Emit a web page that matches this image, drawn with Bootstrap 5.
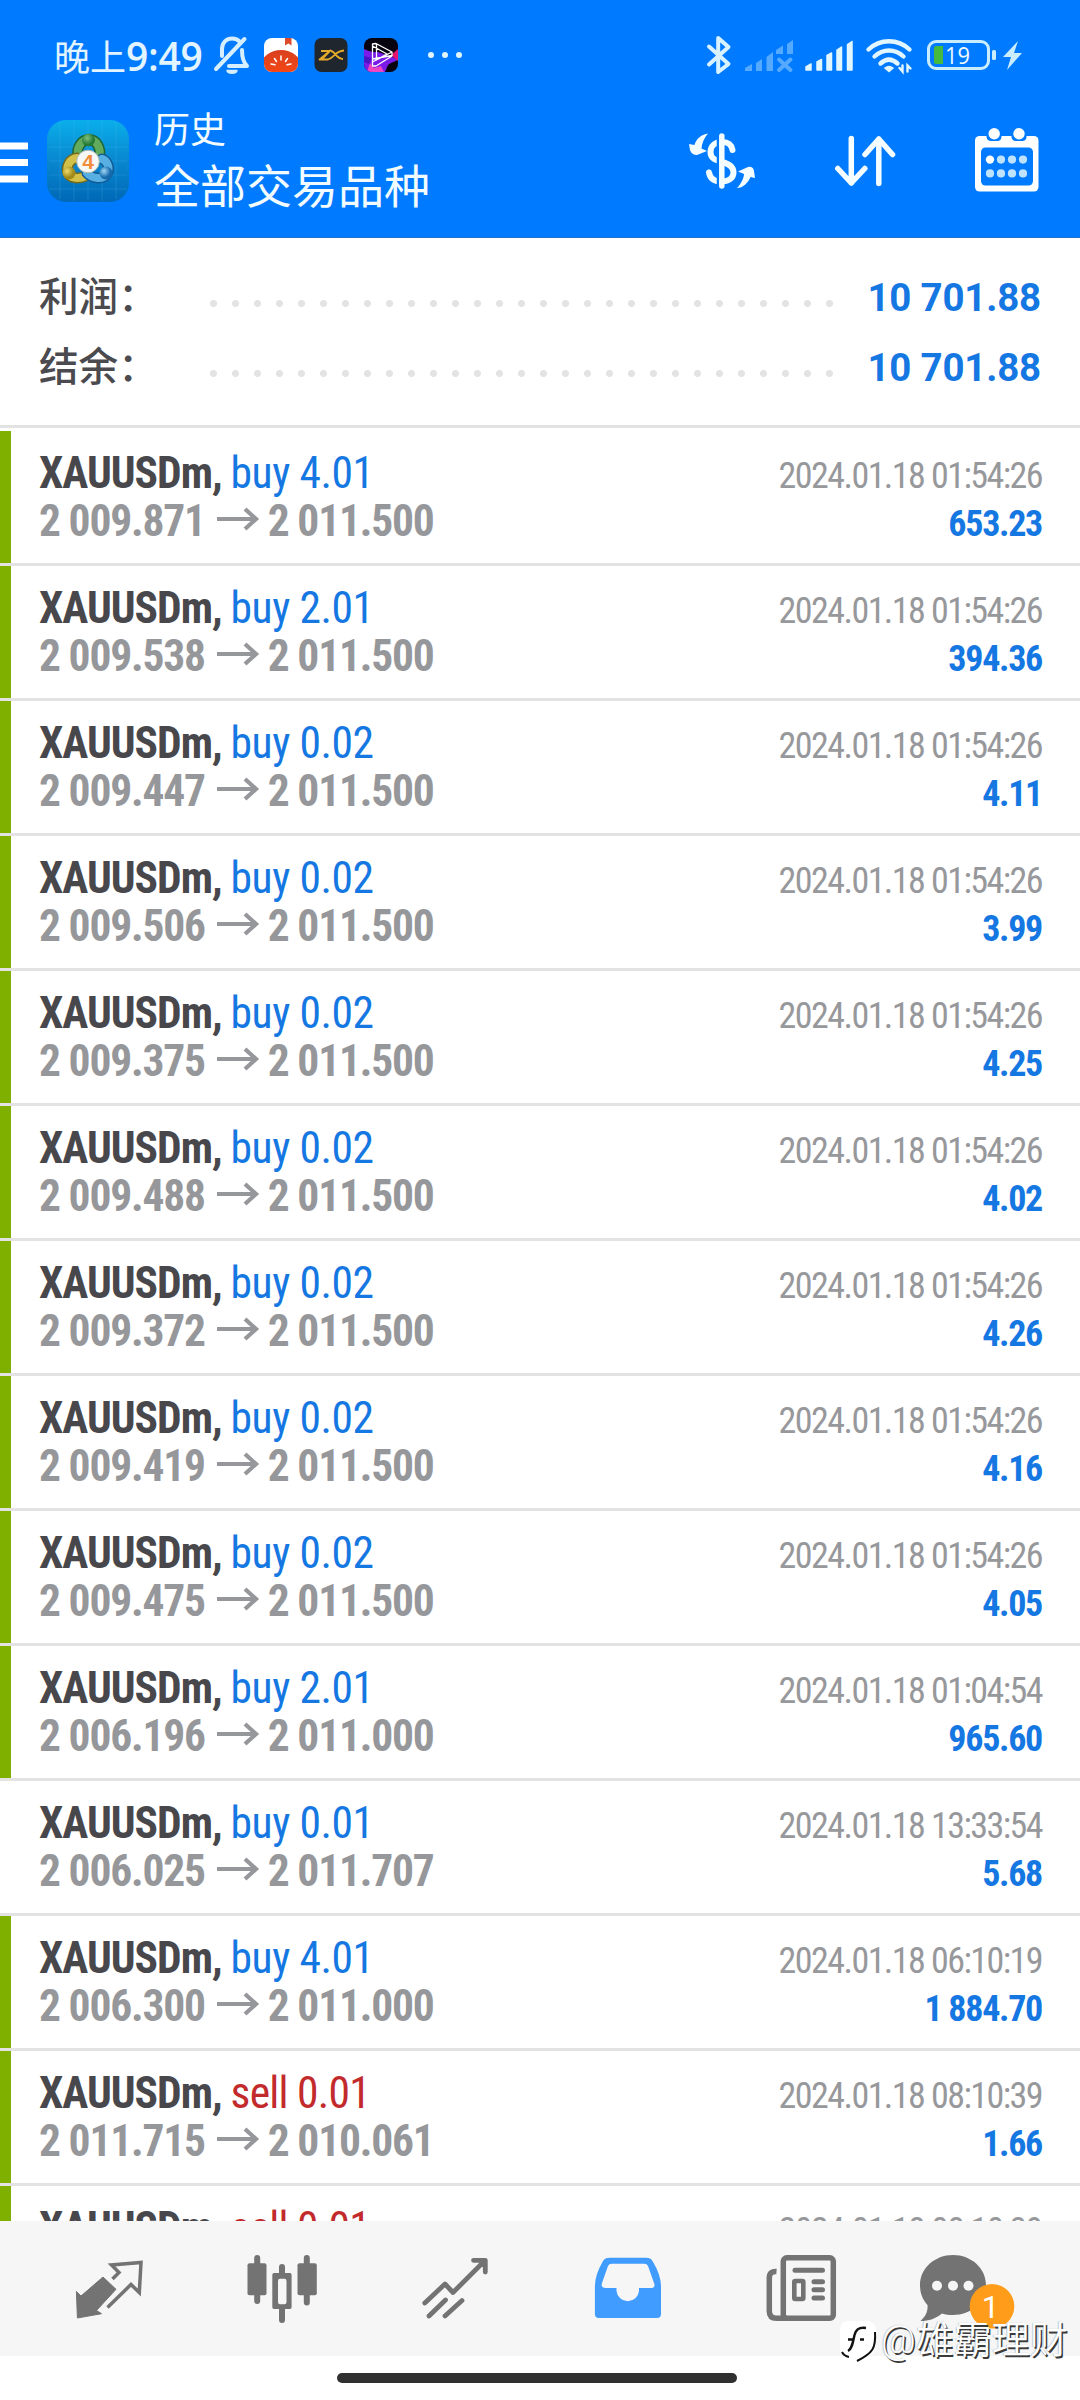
<!DOCTYPE html>
<html lang="zh-CN">
<head>
<meta charset="utf-8">
<meta name="viewport" content="width=device-width, initial-scale=1">
<title>历史</title>
<link href="https://cdn.jsdelivr.net/npm/bootstrap@5.3.0/dist/css/bootstrap.min.css" rel="stylesheet">
<style>
body{font-family:Roboto,"Noto Sans CJK SC",sans-serif;background:#fff;overflow:hidden}
svg{display:block;flex:none;overflow:visible}
.screen{width:1080px;height:2400px;overflow:hidden;position:relative}
.topbar{background:#007bff;height:238px;border-bottom:1px solid #1f6fd0;color:#f2fcff}
.statusbar{height:110px;padding:0 57px 0 54px;color:#e2f4ff}
.clock{font-family:"Open Sans","Noto Sans CJK SC",sans-serif;font-size:39px;font-weight:550;width:142px;line-height:48px;white-space:nowrap;letter-spacing:-.3px}
.clock span{font-family:"Noto Sans CJK SC",sans-serif;font-size:36px;font-weight:400;letter-spacing:0}
.gap16{gap:16px}.gap13{gap:13px}.gap70{gap:70px}
.titlebar{height:102px;padding-right:38px}
.burger{margin-top:4px}
.app-icon{margin-left:19px}
.titles{margin-left:25px;padding-top:8px}
.sub-title{font-size:36px;line-height:44px;font-weight:400}
.main-title{font-size:46px;line-height:68px;font-weight:400}
.totals{height:190px;padding:25px 39px 0;border-bottom:3px solid #e3e3e4}
.total-line{height:70px;line-height:70px}
.total-name{width:171px;font-size:39.6px;font-weight:500;color:#4a4a4f}
.total-dots{width:638px;height:7px;margin-top:11px;background:radial-gradient(circle at 3.5px 3.5px,#e3e3e3 3.1px,transparent 3.9px) 0 0/22px 7px repeat-x}
.total-value{font-size:38.5px;font-weight:700;color:#1577e2;letter-spacing:-.2px;white-space:nowrap}
.deals{padding-top:3px;height:1793px;overflow:hidden}
.deal{height:135px;border-bottom:3px solid #e3e3e4;padding-right:38px;font-stretch:75%}
.stripe{width:11px;height:132px;flex:none}
.stripe.tp{background:#7fb000}
.deal-body{padding:19px 0 0 28px}
.deal-line{height:48px;line-height:48px;white-space:nowrap}
.sym{font-size:43.5px;font-weight:700;color:#48484c;letter-spacing:-1px}
.side{font-size:43.5px;font-weight:400;color:#1577e2;letter-spacing:-.45px}
.side.sell{color:#c22a2c;letter-spacing:-.75px}
.price{font-size:43.5px;font-weight:700;color:#96979a;letter-spacing:-1.2px}
.when{font-size:36px;font-weight:400;color:#97989b;letter-spacing:-1.55px}
.gain{font-size:36px;font-weight:700;color:#1577e2;letter-spacing:-1.3px}
.arrow{display:inline-block;margin:0 9px 0 12px;vertical-align:5.5px}
.tabs{height:135px;background:#f6f6f6;padding:0 20px 0 22px;color:#737373}
.tabs>div{width:173px}
.homebar{height:44px;padding-right:7px}
.homebar i{display:block;width:400px;height:10px;border-radius:5px;background:#303030;margin-top:-1px}
.wm{position:absolute;left:839px;top:2317px;color:#fff}
.wm span{font-size:38px;line-height:42px;font-weight:350;text-shadow:1.5px 1.5px 0 #3a3a3a,-.5px -.5px 1px #aaa;white-space:nowrap;margin-left:4px}
</style>
</head>
<body>
<div class="screen d-flex flex-column">
<header class="topbar flex-shrink-0">
  <div class="statusbar d-flex align-items-center justify-content-between">
    <div class="d-flex align-items-center gap16">
      <div class="clock"><span>晚上</span>9:49</div>
      <svg width="36" height="40" viewBox="212 36 36 40" fill="none" stroke="#d6efff" stroke-width="4" stroke-linecap="round" stroke-linejoin="round"><path d="M222 57V50C222 43 227 39.5 232 39.5C235 39.5 237.5 40.5 239 42"/><path d="M229 67H247C243 63 242 59 242 51"/><path d="M244.5 40L216 70"/><path d="M227 71.5H237C236 75 228 75 227 71.5Z" fill="#d6efff" stroke-width="1.5"/></svg>
      <svg width="34" height="34" viewBox="0 0 34 34"><defs><clipPath id="rc"><rect width="34" height="34" rx="8"/></clipPath><linearGradient id="tom" x1="0" y1="0" x2="0" y2="1"><stop offset="0" stop-color="#d8401f"/><stop offset="1" stop-color="#ff4a12"/></linearGradient></defs><g clip-path="url(#rc)"><rect width="34" height="34" fill="#fff"/><ellipse cx="17" cy="28" rx="20" ry="16" fill="url(#tom)"/><path d="M21 0h6.5v7.5l-3.2-2-3.3 2z" fill="#dc4a2a"/><path d="M17 18v4M10.5 20.5l2 3M23.5 20.5l-2 3M7 26l4 .8M27 26l-4 .8" stroke="#fff" stroke-width="1.5" stroke-linecap="round"/></g></svg>
      <svg width="34" height="34" viewBox="0 0 34 34"><rect x=".5" y="0" width="33" height="34" rx="7" fill="#20262d"/><path d="M7 13H16L8 21M5 21.500H14C20 20 21 13 30 12.500M17 13C21 13 22 21 29 21M5 22L17 12" fill="none" stroke="#e3aa2c" stroke-width="1.800"/></svg>
      <svg width="34" height="34" viewBox="0 0 34 34"><g clip-path="url(#rc)"><rect width="34" height="34" fill="#08040f"/><path d="M0 11Q9 15 14 14L31 20L34 12V22Q26 25 24 27L21 34H0Z" fill="#7a1be8"/><path d="M27 17L34 11V23Z" fill="#e3156f"/><path d="M3 34L6 25L10 30L17 28L20 34Z" fill="#ef45c0"/><path d="M0 18L8 20L5 26L0 24Z" fill="#4a14c4"/><path d="M8.500 6V28L12 28L28 18V14L12 5.500ZM12.500 5.500V22L28 14M8.500 21L28 17.500M8.500 8L23 16L8.500 24" fill="none" stroke="#fff" stroke-width="1.300" stroke-linejoin="round"/></g></svg>
      <svg width="50" height="34" viewBox="414 38 50 34" fill="#e2f4ff"><circle cx="431" cy="55" r="3"/><circle cx="445" cy="55" r="3"/><circle cx="459" cy="55" r="3"/></svg>
    </div>
    <div class="d-flex align-items-center gap13">
      <svg width="26" height="40" viewBox="706 35 26 40" fill="none" stroke="#d9f2ff" stroke-width="4" stroke-linecap="round" stroke-linejoin="round"><path d="M709 46.500L728.500 64L718.200 72V38L728.500 47L709 64.500"/></svg>
      <svg width="47" height="40" viewBox="745 35 47 40" fill="#55aaff"><path d="M745 71V68L752 64V71ZM756 71V63L762 59V71ZM766.500 71V57L773 52V71ZM776 54V50L783 45.500V54ZM787 54V44L793 40V54Z"/><path d="M779 59.500L790.500 70M790.500 59.500L779 70" stroke="#55aaff" stroke-width="4" stroke-linecap="round"/></svg>
      <svg width="48" height="40" viewBox="805 35 48 40" fill="#e2f6ff" stroke="#e2f6ff" stroke-width="1.500" stroke-linejoin="round"><path d="M806 70V67L811 64V70ZM817 70V62L821.500 59.500V70ZM827 70V55.500L831.500 53V70ZM837 70V50L841.500 47V70ZM847.500 70V44.500L852 41.500V70Z"/></svg>
      <svg width="46" height="40" viewBox="866 35 46 40" fill="none" stroke="#e2f6ff" stroke-width="4.400" stroke-linecap="round"><path d="M868.500 49.500C880 38.500 898 38.500 909.500 49.500M874.500 56.500C883 48.500 895 48.500 903.500 56.500M880.500 63.500C886 58.500 892 58.500 897.500 63.500"/><path d="M885 68Q889 65 893 68L889 71.500Z" fill="#e2f6ff" stroke-width="1.500"/><path d="M902.500 65.500V71.500L899.500 68M907.500 71.500V65.500L910.500 68.500" stroke-width="2.400"/></svg>
      <svg width="98" height="40" viewBox="925 35 98 40"><rect x="928.500" y="41.500" width="60" height="27" rx="7.500" fill="none" stroke="#c9edff" stroke-width="3"/><path d="M934 48Q934 46 936 46H943V64H936Q934 64 934 62Z" fill="#46ba3e"/><rect x="992" y="50" width="4" height="10" rx="1.500" fill="#c9edff"/><text x="945" y="63.500" font-family="Open Sans" font-size="24" font-weight="500" fill="#eefaff" textLength="25" lengthAdjust="spacingAndGlyphs">19</text><path d="M1018 41L1003 57H1011L1007 70L1022 53H1014Z" fill="#c9edff"/></svg>
    </div>
  </div>
  <div class="titlebar d-flex align-items-center">
    <svg class="burger" width="28" height="44" viewBox="0 141.500 28 44" fill="#fff"><path d="M0 143h28v7H0zM0 159.500h28v7H0zM0 176h28v7H0z"/></svg>
    <svg class="app-icon" width="82" height="82" viewBox="0 0 82 82">
      <defs><linearGradient id="bgm" x1="0" y1="0" x2="0" y2="1"><stop offset="0" stop-color="#0aaeea"/><stop offset=".5" stop-color="#0887cf"/><stop offset="1" stop-color="#0068b6"/></linearGradient>
      <radialGradient id="gg" cx=".4" cy=".35"><stop offset="0" stop-color="#7fc07e"/><stop offset="1" stop-color="#267a38"/></radialGradient>
      <radialGradient id="gy" cx=".35" cy=".35"><stop offset="0" stop-color="#f0dc6a"/><stop offset="1" stop-color="#a18a1a"/></radialGradient>
      <radialGradient id="gb" cx=".35" cy=".35"><stop offset="0" stop-color="#9fd6f4"/><stop offset="1" stop-color="#1569ac"/></radialGradient></defs>
      <rect width="82" height="82" rx="19" fill="url(#bgm)"/>
      <path d="M2 27H80M2 41H80M2 55H80M2 69H80M13 3V79M27 1V81M41 1V81M55 1V81M69 3V79" stroke="#5cc0f0" stroke-opacity=".2" stroke-width="1"/>
      <g stroke-linecap="round" fill="none">
      <path d="M31 37C29 27 35 19.500 42 19.500C49 19.500 55 28 52 38" stroke="#1c6434" stroke-width="11"/><path d="M31 37C29 27 35 19.500 42 19.500C49 19.500 55 28 52 38" stroke="#63ab5c" stroke-width="8"/>
      <path d="M30 38C22 39 19 47 21 53C24 59 32 59 39 56" stroke="#746b1c" stroke-width="11"/><path d="M30 38C22 39 19 47 21 53C24 59 32 59 39 56" stroke="#d2c048" stroke-width="8"/>
      <path d="M40 53C45 59 56 60 60 54C64 47 59 40 55 39" stroke="#135a96" stroke-width="11"/><path d="M40 53C45 59 56 60 60 54C64 47 59 40 55 39" stroke="#58b0e2" stroke-width="8"/></g>
      <circle cx="41.500" cy="20" r="6.500" fill="url(#gg)"/><circle cx="22" cy="53" r="6.500" fill="url(#gy)"/><circle cx="59" cy="53" r="6.500" fill="url(#gb)"/>
      <circle cx="41" cy="41.500" r="11.300" fill="#f7f7f5" stroke="#a9b8b0"/>
      <text x="41" y="49" text-anchor="middle" font-family="Liberation Sans" font-size="21" font-weight="700" fill="#f28c3c">4</text>
    </svg>
    <div class="titles flex-grow-1"><div class="sub-title">历史</div><div class="main-title">全部交易品种</div></div>
    <div class="d-flex align-items-center gap70">
      <svg width="72" height="80" viewBox="686 121 72 80"><path d="M732.500 150C731.500 144 728 142 722 142C714 142 710.500 147 710.500 152C710.500 158.500 715 160 722 162C729 163.800 733.500 166.500 733.500 172.500C733.500 178 728.500 181.500 721 181.500C713.500 181.500 710 178 709 172.500" fill="none" stroke="#f4fdff" stroke-width="6" stroke-linecap="round"/><path d="M718 134V187" stroke="#007bff" stroke-width="2.500"/><path d="M721.800 136V186" stroke="#f4fdff" stroke-width="5.500" stroke-linecap="round"/><path d="M708 133.500C702 134 696 139 694.500 145L689 144L690 150Q691.500 155 697 155L707 151L701.500 148.500C702 143 704 138 708 133.500ZM737 188C741 184 744 178 744 174L738 171.500L748 167Q753 166 754 171L755 178L750.500 177C748 183 743 188 737 188Z" fill="#f4fdff"/></svg>
      <svg width="72" height="80" viewBox="828 121 72 80" fill="none" stroke="#f4fdff" stroke-width="5.500" stroke-linecap="round" stroke-linejoin="round"><path d="M851.300 138.500V183M837.800 168.500L851.300 183L864.800 168.500M878.800 183.500V139M865 154.500L878.800 139L892.500 154.500"/></svg>
      <svg width="72" height="80" viewBox="970 121 72 80"><rect x="975" y="136" width="63.500" height="55.500" rx="4.500" fill="#fff"/><path d="M986.500 135V137Q987 141 991 141H997.500Q1001 141 1001.500 137V135ZM1011.500 135V137Q1012 141 1016 141H1022.500Q1026 141 1026.500 137V135Z" fill="#007bff"/><rect x="981" y="147.500" width="52" height="38" rx="4.500" fill="#007bff"/><circle cx="994.200" cy="133.700" r="5.700" fill="#fff"/><circle cx="1019" cy="133.700" r="5.700" fill="#fff"/><g fill="#bfe3ff"><circle cx="990" cy="159.600" r="4.200" fill="#fff"/><circle cx="1001" cy="159.600" r="4.100"/><circle cx="1012" cy="159.600" r="4.100"/><circle cx="1023" cy="159.600" r="4.100"/><circle cx="990" cy="173.400" r="4.100"/><circle cx="1001" cy="173.400" r="4.100"/><circle cx="1012" cy="173.400" r="4.100"/><circle cx="1023" cy="173.400" r="4.100"/></g></svg>
    </div>
  </div>
</header>
<section class="totals flex-shrink-0">
  <div class="total-line d-flex align-items-center"><div class="total-name">利润：</div><div class="total-dots"></div><div class="total-value ms-auto">10 701.88</div></div>
  <div class="total-line d-flex align-items-center"><div class="total-name">结余：</div><div class="total-dots"></div><div class="total-value ms-auto">10 701.88</div></div>
</section>
<main class="deals flex-shrink-0" id="deals"></main>
<nav class="tabs d-flex justify-content-between align-items-center flex-shrink-0">
  <div class="d-flex justify-content-center"><svg width="72" height="72" viewBox="72 2252 72 72"><path d="M75.400 2290.500L80 2295L102 2276L115 2288.300L95.500 2309.500L100.500 2312.700L76.400 2317Z" fill="#737373" stroke="#737373" stroke-width="1" stroke-linejoin="round"/><path d="M106.500 2306.500L130 2283.500L138.300 2291.500L140 2261.500L110.500 2264L118 2271.500L111.500 2278" fill="none" stroke="#737373" stroke-width="3.500"/></svg></div>
  <div class="d-flex justify-content-center"><svg width="72" height="72" viewBox="245 2252 72 72" fill="none" stroke="#737373" stroke-width="6" stroke-linecap="round"><path d="M256.200 2257V2300M305.800 2257V2301.500M281 2266V2272M281 2308V2319"/><g fill="#737373" stroke="none"><rect x="246.500" y="2262.300" width="19" height="32" rx="2"/><rect x="296.500" y="2262.300" width="19.300" height="32" rx="2"/><path fill-rule="evenodd" d="M273 2272H289Q290.600 2272 290.600 2274V2306Q290.600 2308 289 2308H273Q271.300 2308 271.300 2306V2274Q271.300 2272 273 2272ZM279 2277.700Q277 2277.700 277 2280V2301Q277 2303.300 279 2303.300H283.500Q285.500 2303.300 285.500 2301V2280Q285.500 2277.700 283.500 2277.700Z"/></g></svg></div>
  <div class="d-flex justify-content-center"><svg width="72" height="72" viewBox="418 2252 72 72" fill="none" stroke="#737373" stroke-width="4.800" stroke-linecap="round" stroke-linejoin="round"><path d="M423.800 2302L444 2283L452 2291.500L484 2259.500M472.500 2259.300H484.300V2271M428 2315L444.500 2299M444 2315L461 2299.500"/></svg></div>
  <div class="d-flex justify-content-center"><svg width="72" height="72" viewBox="591.5 2252 72 72"><path fill="#409cff" fill-rule="evenodd" d="M609 2256.700H646Q650 2256.700 652 2260Q660.500 2274 660.500 2285V2313Q660.500 2317 656.500 2317H598.500Q594.400 2317 594.400 2313V2285Q594.400 2274 602.500 2260Q604.500 2256.700 609 2256.700ZM611 2262.700Q608.500 2262.700 607.500 2265L601.500 2282Q600 2287 605 2287H616V2290A11.300 11.300 0 0 0 638.500 2290V2287H650Q655.500 2287 653.500 2282L647.500 2265Q646.500 2262.700 644 2262.700Z"/></svg></div>
  <div class="d-flex justify-content-center"><svg width="72" height="72" viewBox="764.5 2252 72 72" fill="none" stroke="#737373" stroke-width="5.500"><rect x="782.800" y="2256.800" width="50" height="60.500" rx="3.500"/><path d="M776 2270.500Q768.800 2270 768.800 2277V2310Q768.800 2317.300 776 2317.300H786"/><path d="M794.500 2269.300H822M813.500 2280.700H822M813.500 2288.700H822M813.500 2297H822" stroke-width="5" stroke-linecap="round"/><rect x="793.800" y="2280" width="9" height="18" rx="1" stroke-width="4.600"/></svg></div>
  <div class="d-flex justify-content-center"><svg width="108" height="72" viewBox="920 2252 108 72"><path d="M953 2254C971.500 2254 986 2267.500 986 2284C986 2301 971.500 2314 953 2314C949 2314 945.500 2313.500 942 2312.500C936 2317.500 929 2320 920.500 2320C926 2315 928 2310 927.500 2304C922.500 2298.500 920 2292 920 2284C920 2267.500 934.500 2254 953 2254Z" fill="#737373"/><circle cx="937" cy="2284.800" r="5" fill="#f6f6f6"/><circle cx="953" cy="2284.800" r="5" fill="#f6f6f6"/><circle cx="968.500" cy="2284.800" r="5" fill="#f6f6f6"/><circle cx="992" cy="2305.300" r="22.300" fill="#ff9d1a"/><text x="990.500" y="2317" text-anchor="middle" font-family="Roboto" font-size="31" fill="#fff">1</text></svg></div>
</nav>
<div class="homebar d-flex justify-content-center align-items-center flex-shrink-0"><i></i></div>
<div class="wm d-flex align-items-center">
  <svg width="38" height="46" viewBox="0 0 38 46"><path d="M10 4H27Q37 4 37 13V27Q37 36 29 40L18 45V40H10Q1 39 1 30V13Q1 4 10 4Z" fill="#fff"/><path d="M27 11C20 10 17 12 15.500 18C14 25 13 32 9 34M9 22.500H14M21 22.500H25" fill="none" stroke="#111" stroke-width="2.400"/><path d="M36 15C37 31 34 36 18 44M3 35Q5 39 10 40" fill="none" stroke="#111" stroke-width="2"/></svg>
  <span>@雄霸理财</span>
</div>
</div>
<script>
const deals=[
['buy','4.01','2 009.871','2 011.500','01:54:26','653.23',1],
['buy','2.01','2 009.538','2 011.500','01:54:26','394.36',1],
['buy','0.02','2 009.447','2 011.500','01:54:26','4.11',1],
['buy','0.02','2 009.506','2 011.500','01:54:26','3.99',1],
['buy','0.02','2 009.375','2 011.500','01:54:26','4.25',1],
['buy','0.02','2 009.488','2 011.500','01:54:26','4.02',1],
['buy','0.02','2 009.372','2 011.500','01:54:26','4.26',1],
['buy','0.02','2 009.419','2 011.500','01:54:26','4.16',1],
['buy','0.02','2 009.475','2 011.500','01:54:26','4.05',1],
['buy','2.01','2 006.196','2 011.000','01:04:54','965.60',1],
['buy','0.01','2 006.025','2 011.707','13:33:54','5.68',0],
['buy','4.01','2 006.300','2 011.000','06:10:19','1 884.70',1],
['sell','0.01','2 011.715','2 010.061','08:10:39','1.66',1],
['sell','0.01','2 011.715','2 010.061','08:10:39','1.66',1]];
document.getElementById('deals').innerHTML=deals.map(([side,vol,open,close,t,gain,tp],i)=>`
<article class="deal d-flex"><div class="stripe ${tp?'tp':''}"></div><div class="deal-body flex-grow-1">
<div class="deal-line d-flex justify-content-between align-items-baseline"><div><span class="sym">XAUUSDm, </span><span class="side ${side}">${side} ${vol}</span></div><span class="when">2024.01.18 ${t}</span></div>
${i===deals.length-1?'':`<div class="deal-line d-flex justify-content-between align-items-baseline"><div class="price">${open}<svg class="arrow" width="42" height="24" viewBox="0 0 42 24" fill="none" stroke="#96979a" stroke-width="4.200"><path d="M0 12H39M28 2L39 12L28 22"/></svg>${close}</div><span class="gain">${gain}</span></div>`}
</div></article>`).join('');
</script>
<script src="https://cdn.jsdelivr.net/npm/bootstrap@5.3.0/dist/js/bootstrap.bundle.min.js"></script>
</body>
</html>
